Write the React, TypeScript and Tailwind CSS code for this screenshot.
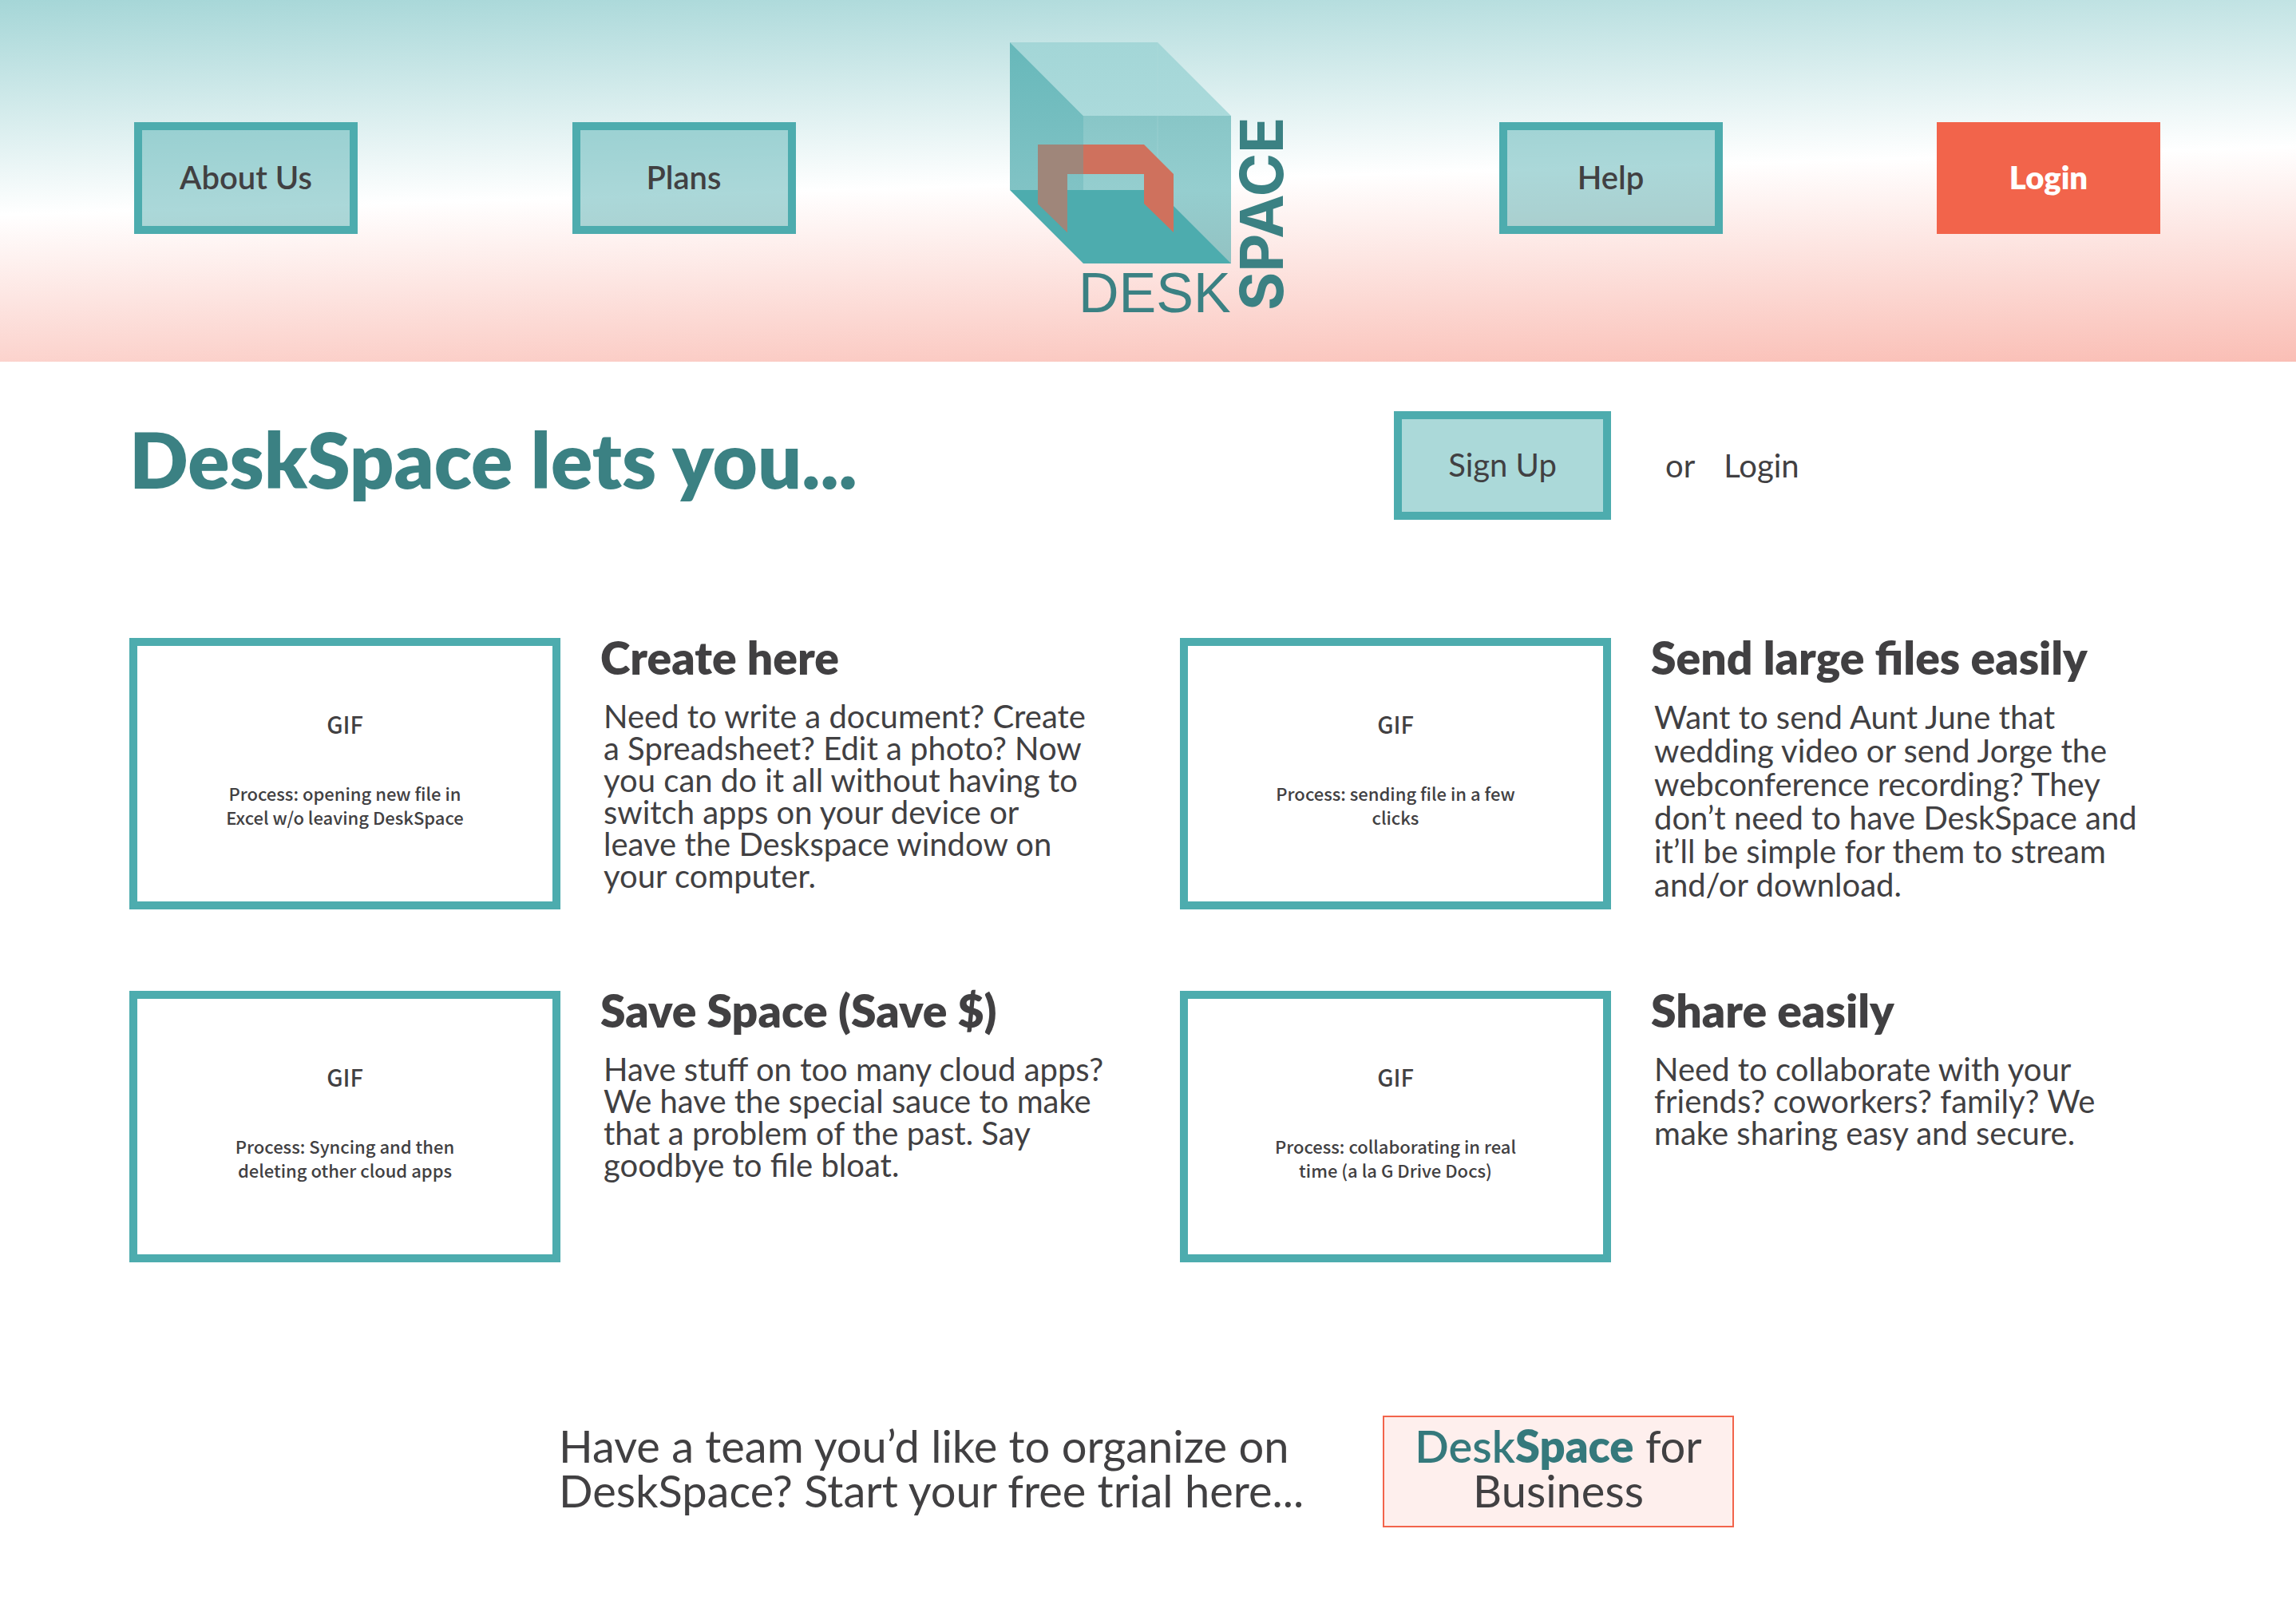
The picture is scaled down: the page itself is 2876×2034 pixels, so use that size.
type Feature = { title: string; body: string; caption: string; roomy?: boolean };

const features: Feature[] = [
  {
    title: "Create here",
    body: "Need to write a document? Create\na Spreadsheet? Edit a photo? Now\nyou can do it all without having to\nswitch apps on your device or\nleave the Deskspace window on\nyour computer.",
    caption: "Process: opening new file in\nExcel w/o leaving DeskSpace",
  },
  {
    title: "Send large files easily",
    body: "Want to send Aunt June that\nwedding video or send Jorge the\nwebconference recording? They\ndon’t need to have DeskSpace and\nit’ll be simple for them to stream\nand/or download.",
    caption: "Process: sending file in a few\nclicks",
    roomy: true,
  },
  {
    title: "Save Space (Save $)",
    body: "Have stuff on too many cloud apps?\nWe have the special sauce to make\nthat a problem of the past. Say\ngoodbye to file bloat.",
    caption: "Process: Syncing and then\ndeleting other cloud apps",
  },
  {
    title: "Share easily",
    body: "Need to collaborate with your\nfriends? coworkers? family? We\nmake sharing easy and secure.",
    caption: "Process: collaborating in real\ntime (a la G Drive Docs)",
  },
];

function Logo() {
  return (
    <svg
      width="344"
      height="380"
      viewBox="0 -20 344 380"
      role="img"
      aria-label="DeskSpace"
      className="shrink-0 overflow-visible"
    >
      <defs>
        <linearGradient id="left" x1="0" y1="0" x2="0" y2="1">
          <stop offset="0" stopColor="#67b8ba" />
          <stop offset="1" stopColor="#81c3c5" />
        </linearGradient>
        <linearGradient id="front" x1="0" y1="0" x2="0" y2="1">
          <stop offset="0" stopColor="#88c6c7" />
          <stop offset="0.5" stopColor="#95cecf" />
          <stop offset="1" stopColor="#93c2c2" />
        </linearGradient>
        <linearGradient id="top" x1="0" y1="0" x2="0" y2="1">
          <stop offset="0" stopColor="#a3d6d7" />
          <stop offset="1" stopColor="#abdadb" />
        </linearGradient>
      </defs>
      <polygon points="0,0 185,0 277,92 92,92" fill="url(#top)" />
      <polygon points="92,92 277,92 277,277 92,277" fill="url(#front)" />
      <polygon points="0,0 92,92 92,185 0,185" fill="url(#left)" />
      <polygon points="0,185 185,185 277,277 92,277" fill="#4dacae" />
      <path d="M185 0V185" stroke="#b4dcdc" strokeOpacity="0.35" />
      <polygon points="35,128 168,128 205,165 205,238 168,202 168,165 72,165 72,238 35,202" fill="#cf715d" />
      <polygon points="35,128 92,128 92,165 72,165 72,238 35,202" fill="#9f867a" />
      <text x="86" y="338" fontSize="70" className="fill-[#3b8183] font-['Liberation_Sans',sans-serif]">DESK</text>
      <text transform="translate(342 336) rotate(-90)" fontSize="74" className="fill-[#3b8183] font-[Inter,sans-serif] font-bold">SPACE</text>
    </svg>
  );
}

const boxButton =
  "flex h-[140px] w-[280px] shrink-0 items-center justify-center border-10 border-[#4dacae] bg-[#4dacae]/47 pb-0.5 text-[40px] leading-10 font-semibold";

function FeatureCard({ title, body, caption, roomy }: Feature) {
  return (
    <article className="flex items-start gap-[50px]">
      <div className="flex h-[340px] w-[540px] shrink-0 flex-col items-center border-10 border-[#4dacae] pt-[82px] text-center font-['Noto_Sans_CJK_SC',sans-serif] font-medium">
        <p className="text-[29px] leading-[30px]">GIF</p>
        <p className="mt-[57px] text-[22px] leading-[30px] whitespace-pre-line">{caption}</p>
      </div>
      <div className="min-w-0 whitespace-pre">
        <h2 className="text-[57px] leading-[48px] font-extrabold">{title}</h2>
        <p className={`mt-[30px] pl-1 text-[40px] ${roomy ? "leading-[42px]" : "leading-10"}`}>{body}</p>
      </div>
    </article>
  );
}

export default function App() {
  return (
    <div className="min-h-screen bg-white font-[Lato,sans-serif] text-[#414042]">
      <header className="bg-[linear-gradient(178.3deg,#a5d6d7_0%,#ffffff_50%,#fabeb5_100%)]">
        <nav className="flex items-center justify-between pt-[33px] pr-[170px] pb-10 pl-[168px]">
          <a href="#about" className={boxButton}>About Us</a>
          <a href="#plans" className={boxButton}>Plans</a>
          <Logo />
          <a href="#help" className={boxButton}>Help</a>
          <button className="flex h-[140px] w-[280px] shrink-0 items-center justify-center bg-[#f2644b] pb-0.5 text-[40px] leading-10 font-extrabold text-white">
            Login
          </button>
        </nav>
      </header>

      <main className="px-[162px] pt-[62px]">
        <section className="grid grid-cols-2 gap-x-20">
          <h1 className="text-[97px] leading-[120px] font-extrabold whitespace-nowrap text-[#3b8183]">DeskSpace lets you...</h1>
          <div className="flex items-center">
            <div className="flex w-[540px] justify-end">
              <button className="flex h-[136px] w-[272px] items-center justify-center border-10 border-[#4dacae] bg-[#abd9d9] pb-0.5 text-[40px] leading-10">
                Sign Up
              </button>
            </div>
            <span className="ml-[68px] text-[40px] leading-10">or</span>
            <a href="#login" className="ml-9 text-[40px] leading-10">Login</a>
          </div>
        </section>

        <section className="mt-[148px] grid grid-cols-2 gap-x-20 gap-y-[102px]">
          {features.map((f) => (
            <FeatureCard key={f.title} {...f} />
          ))}
        </section>

        <section className="mt-[192px] flex items-start justify-center pr-1 text-[56px] leading-14">
          <p className="w-[1032px] pt-2.5 whitespace-pre">{"Have a team you’d like to organize on\nDeskSpace? Start your free trial here..."}</p>
          <a href="#business" className="h-[140px] w-[440px] shrink-0 border-2 border-[#f2644b] bg-[#feefed] pt-2 text-center">
            <span className="font-semibold text-[#35797c]">Desk</span>
            <span className="font-extrabold text-[#35797c]">Space</span> for
            <br />
            Business
          </a>
        </section>
      </main>
    </div>
  );
}
